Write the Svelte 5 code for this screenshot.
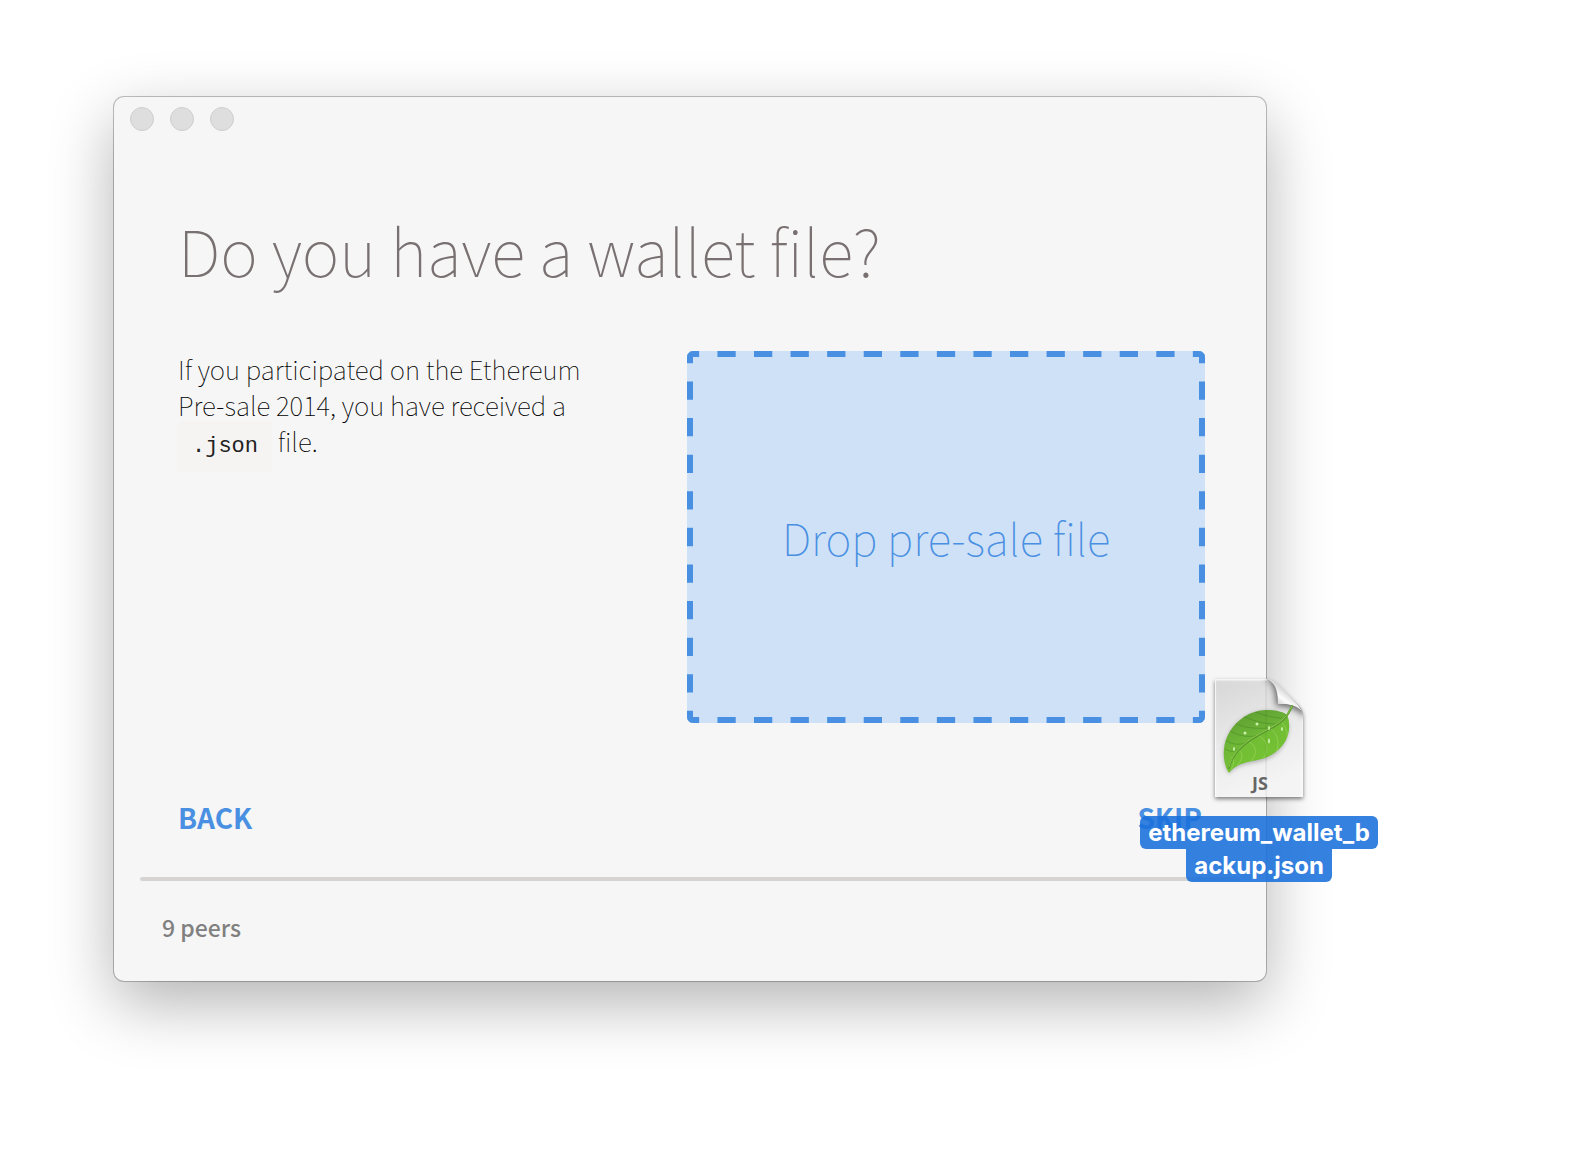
<script>
  let peers = $state(9);
  const lights = ['Close', 'Minimize', 'Zoom'];
  const nameLines = ['ethereum_wallet_b', 'ackup.json'];
</script>

<div class="desktop">
  <main class="window">
    <header class="titlebar">
      {#each lights as label}
        <button class="light" aria-label={label}></button>
      {/each}
    </header>

    <section class="content">
      <h1>Do you have a wallet file?</h1>
      <div class="columns">
        <p class="intro">
          If you participated on the Ethereum Pre-sale 2014, you have received a <code>.json</code> file.
        </p>
        <button class="dropzone">
          <svg class="dashes" aria-hidden="true">
            <line x1="0" y1="0" x2="100%" y2="0" pathLength="28" />
            <line x1="0" y1="100%" x2="100%" y2="100%" pathLength="28" />
            <line x1="0" y1="0" x2="0" y2="100%" pathLength="20" />
            <line x1="100%" y1="0" x2="100%" y2="100%" pathLength="20" />
            <circle cx="0" cy="0" r="3" />
            <circle cx="100%" cy="0" r="3" />
            <circle cx="0" cy="100%" r="3" />
            <circle cx="100%" cy="100%" r="3" />
          </svg>
          Drop pre-sale file
        </button>
      </div>
      <nav class="steps">
        <button>Back</button>
        <button>Skip</button>
      </nav>
    </section>

    <footer class="status">{peers} peers</footer>

    <figure class="dragged">
      <svg class="document" viewBox="0 0 104 132" role="img" aria-label="JS document">
        <defs>
          <linearGradient id="paper" x1="0" y1="0" x2="0.3" y2="1">
            <stop offset="0" stop-color="#dedede" />
            <stop offset="0.55" stop-color="#f3f3f3" />
            <stop offset="1" stop-color="#fff" />
          </linearGradient>
          <linearGradient id="fold" gradientUnits="userSpaceOnUse" x1="82" y1="14" x2="70" y2="30">
            <stop offset="0" stop-color="#c4c4c4" />
            <stop offset="0.35" stop-color="#dcdcdc" />
            <stop offset="0.7" stop-color="#fdfdfd" />
            <stop offset="1" stop-color="#d8d8d8" />
          </linearGradient>
          <linearGradient id="leaf" x1="0.2" y1="0" x2="0.6" y2="1">
            <stop offset="0" stop-color="#5e9d32" />
            <stop offset="0.45" stop-color="#6db637" />
            <stop offset="1" stop-color="#7cc536" />
          </linearGradient>
          <filter id="soft" x="-20%" y="-20%" width="140%" height="140%">
            <feGaussianBlur stdDeviation="2" />
          </filter>
          <filter id="softer" x="-40%" y="-40%" width="180%" height="180%">
            <feGaussianBlur stdDeviation="3" />
          </filter>
          <clipPath id="sheet">
            <path d="M8 7H58C64 7 68 10 72 14L92 34C95 37 96 40 96 45V125H8Z" />
          </clipPath>
          <clipPath id="blade">
            <path d="M22 101C18 95 16 86 17 77C19 57 37 38 60 38C68 38 77 40 80 43C84 52 83 67 72 77C55 94 35 84 22 101Z" />
          </clipPath>
        </defs>
        <path class="cast" filter="url(#soft)" d="M8 9H58C64 9 68 12 72 16L92 36C95 39 96 42 96 47V127H8Z" />
        <path fill="url(#paper)" fill-opacity="0.92" d="M8 7H58C64 7 68 10 72 14L92 34C95 37 96 40 96 45V125H8Z" />
        <g clip-path="url(#sheet)">
          <path class="fold-shade" filter="url(#softer)" d="M56 5C67 9 69 20 69 34C80 34 91 36 98 46V30L72 5Z" />
          <path class="rim" d="M8 125V7.500H60" />
          <path class="seam" d="M59 7V125" />
        </g>
        <path fill="url(#fold)" d="M60 7C69 11 71 20 71 32C80 32 88 32 95 39C93 36 92 34 90 32L74 15C70 11 66 7 60 7Z" />
        <path class="leaf-cast" filter="url(#soft)" d="M22 102C18 96 16 87 17 78C19 58 37 39 60 39C84 39 88 60 72 79C55 96 35 86 22 102Z" />
        <path fill="url(#leaf)" d="M22 101C18 95 16 86 17 77C19 57 37 38 60 38C68 38 77 40 80 43C84 52 83 67 72 77C55 94 35 84 22 101Z" />
        <g clip-path="url(#blade)">
          <path class="under" d="M19 93C28 73 51 63 64 57C73 52 79 46 86 36V80L60 100H20Z" />
          <path class="veins" d="M28 51C37 56 48 57 63 56M23 59C32 64 42 66 52 63M18 68C26 73 34 74 41 69M18 77C23 80 27 80 31 77M36 44C46 49 58 52 69 52M46 39C56 43 66 46 75 46" />
          <path class="veins light-vein" d="M24 85C28 88 27 93 24 97M31 77C37 82 36 88 30 93M41 69C50 74 51 82 43 90M52 64C62 70 62 80 55 88M64 57C71 62 73 72 69 80M74 49C79 55 81 61 80 67" />
          <path class="seam" d="M59 30V100" />
        </g>
        <path class="midrib-dark" d="M22 96C27 74 49 65 63 57C74 51 80 46 85 34" />
        <path class="midrib" d="M22 95C27 73 49 64 63 56C74 50 80 45 85 34" />
        <g class="drops">
          <circle cx="50" cy="52" r="1.500" />
          <circle cx="38" cy="61" r="1.500" />
          <ellipse cx="62" cy="56" rx="1" ry="2" />
          <ellipse cx="75" cy="57" rx="1" ry="2" />
          <ellipse cx="62" cy="69" rx="1" ry="2.500" />
          <ellipse cx="27" cy="77" rx="1" ry="2" />
        </g>
        <text x="53" y="118" text-anchor="middle">JS</text>
      </svg>
      <figcaption>
        {#each nameLines as line}
          <span>{line}</span>
        {/each}
      </figcaption>
    </figure>
  </main>
</div>

<style>
  :global(body) {
    margin: 0;
    background: #fff;
  }

  .desktop {
    box-sizing: border-box;
    min-height: 100vh;
    padding: 97px 329px 190px 114px;
    overflow: hidden;
    font-family: 'Noto Sans CJK SC', 'Open Sans', sans-serif;
  }

  button {
    padding: 0;
    border: 0;
    background: none;
    font: inherit;
    cursor: pointer;
  }

  .window {
    position: relative;
    border-radius: 10px;
    background: #f6f6f6;
    box-shadow:
      0 0 0 1px rgba(0, 0, 0, 0.22),
      0 0 2px rgba(0, 0, 0, 0.1),
      0 22px 64px rgba(0, 0, 0, 0.3);
  }

  .titlebar {
    display: flex;
    gap: 16px;
    padding: 10px 16px;
  }

  .light {
    box-sizing: border-box;
    width: 24px;
    height: 24px;
    border: 1px solid #cfcfcf;
    border-radius: 50%;
    background: #dedede;
  }

  .content {
    padding: 68px 61px 40px 64px;
  }

  h1 {
    margin: 0 0 62px;
    color: #787071;
    font-size: 64px;
    font-weight: 100;
    line-height: 80px;
  }

  .columns {
    display: grid;
    grid-template-columns: 1fr 518px;
    gap: 80px;
  }

  .intro {
    margin: 0;
    color: #000;
    font-size: 26px;
    font-weight: 100;
    line-height: 36px;
  }

  code {
    padding: 13px 14px;
    background: #f5f4f2;
    color: #222;
    font-family: 'Courier New', 'Liberation Mono', monospace;
    font-size: 22px;
    font-weight: 400;
    line-height: 24px;
  }

  .dropzone {
    position: relative;
    height: 372px;
    overflow: hidden;
    border-radius: 6px;
    background: #cfe1f7;
    color: #4a90e2;
    font-size: 44px;
    font-weight: 100;
    line-height: 56px;
  }

  .dashes {
    position: absolute;
    top: 3px;
    left: 3px;
    width: calc(100% - 6px);
    height: calc(100% - 6px);
    overflow: visible;
  }

  .dashes line {
    stroke: #4a90e2;
    stroke-width: 6px;
    stroke-dasharray: 1 1;
    stroke-dashoffset: 0.5;
  }

  .dashes circle {
    fill: #4a90e2;
  }

  .steps {
    display: flex;
    justify-content: space-between;
    margin-top: 74px;
    padding-right: 3px;
  }

  .steps button {
    color: #4a90e2;
    font-size: 28px;
    font-weight: 700;
    line-height: 40px;
    text-transform: uppercase;
  }

  .status {
    position: relative;
    margin: 0 26px;
    padding: 33px 22px 37px;
    color: #808080;
    font-size: 23px;
    font-weight: 500;
    line-height: 34px;
  }

  .status::before {
    position: absolute;
    top: 0;
    right: 0;
    left: 0;
    height: 4px;
    border-radius: 2px;
    background: #d5d4d2;
    content: '';
  }

  .dragged {
    position: absolute;
    right: -112px;
    bottom: 99px;
    display: flex;
    flex-direction: column;
    align-items: center;
    gap: 12px;
    margin: 0;
  }

  .document {
    width: 104px;
    height: 132px;
  }

  .document text {
    fill: #666;
    font-family: 'Open Sans', sans-serif;
    font-size: 18px;
    font-weight: 700;
  }

  .cast {
    fill: rgba(0, 0, 0, 0.5);
  }

  .fold-shade {
    fill: rgba(0, 0, 0, 0.55);
  }

  .rim {
    fill: none;
    stroke: rgba(255, 255, 255, 0.7);
    stroke-width: 2px;
  }

  .seam {
    fill: none;
    stroke: rgba(0, 0, 0, 0.08);
    stroke-width: 1px;
  }

  .leaf-cast {
    fill: rgba(0, 0, 0, 0.25);
  }

  .under {
    fill: rgba(116, 196, 50, 0.5);
  }

  .veins {
    fill: none;
    stroke: rgba(50, 110, 25, 0.3);
    stroke-width: 1px;
  }

  .light-vein {
    stroke: rgba(180, 230, 120, 0.4);
  }

  .midrib,
  .midrib-dark {
    fill: none;
    stroke: #8cc84b;
    stroke-width: 1px;
    stroke-linecap: round;
  }

  .midrib-dark {
    stroke: #5a9a30;
    stroke-width: 2px;
  }

  .drops {
    fill: #c9f0a8;
  }

  figcaption {
    display: flex;
    flex-direction: column;
    align-items: center;
    color: #fff;
    font-family: Inter, sans-serif;
    font-size: 24px;
    font-weight: 700;
    line-height: 33px;
  }

  figcaption span {
    padding: 0 8px;
    border-radius: 6px;
    background: rgba(24, 112, 219, 0.88);
  }

  figcaption span + span {
    border-radius: 0 0 6px 6px;
  }
</style>
